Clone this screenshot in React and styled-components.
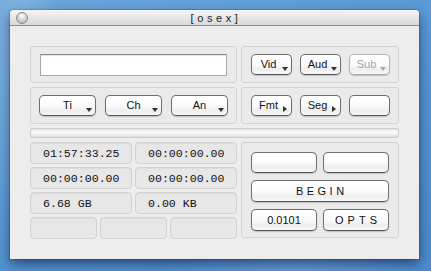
import React from "react";
import styled, { createGlobalStyle } from "styled-components";

const GlobalStyle = createGlobalStyle`
  html, body {
    margin: 0;
    padding: 0;
  }
  body {
    width: 431px;
    height: 271px;
    overflow: hidden;
    background:
      radial-gradient(ellipse 60px 300px at 20px 60px, rgba(255, 255, 255, 0.18), transparent 70%),
      radial-gradient(ellipse 200px 60px at 300px 270px, rgba(255, 255, 255, 0.12), transparent 70%),
      linear-gradient(160deg, #6aa6dc 0%, #5596d4 50%, #4a8acb 100%);
    font-family: "Liberation Sans", Arial, sans-serif;
  }
`;

const Desktop = styled.div`
  padding: 10px 0 0 10px;
`;

const Window = styled.div`
  width: 409px;
  height: 249px;
  background: #ededed;
  border-radius: 4px 4px 0 0;
  box-shadow: 0 5px 12px rgba(0, 0, 40, 0.5), 0 0 0 1px rgba(0, 0, 0, 0.15);
  display: flex;
  flex-direction: column;
  overflow: hidden;
`;

const TitleBar = styled.div`
  height: 15px;
  flex: none;
  position: relative;
  display: flex;
  align-items: center;
  justify-content: center;
  background: linear-gradient(#f6f6f6, #e4e4e4 60%, #dadada);
  border-bottom: 1px solid #8c8c8c;
`;

const CloseDot = styled.div`
  position: absolute;
  left: 6px;
  top: 2px;
  width: 10px;
  height: 10px;
  border-radius: 50%;
  border: 1px solid #8a8a8a;
  background: radial-gradient(circle at 50% 30%, #ffffff 0%, #d6d6d6 45%, #a9a9a9 100%);
`;

const Title = styled.div`
  font-size: 11px;
  letter-spacing: 3.6px;
  color: #222;
  padding-left: 3px;
`;

const Body = styled.div`
  padding: 20px 20px 0 20px;
  display: grid;
  grid-template-columns: 207px 158px;
  grid-template-rows: 37px 37px 10px 96px;
  column-gap: 4px;
  row-gap: 4px;
`;

const Panel = styled.div`
  border: 1px solid #d3d3d3;
  border-radius: 3px;
  background: #eaeaea;
  box-sizing: border-box;
  display: flex;
  align-items: center;
  gap: ${p => p.$gap || 8}px;
  padding: ${p => p.$pad || "0 9px"};
`;

const TextField = styled.div`
  width: 188px;
  height: 22px;
  box-sizing: border-box;
  background: #fff;
  border: 1px solid #a8a8a8;
  border-top-color: #8a8a8a;
  box-shadow: inset 0 1px 1px rgba(0, 0, 0, 0.12);
`;

const Button = styled.div`
  width: ${p => p.$w || 41}px;
  height: ${p => p.$h || 21}px;
  box-sizing: border-box;
  flex: none;
  position: relative;
  display: flex;
  align-items: center;
  justify-content: center;
  padding-bottom: 1px;
  border-radius: 5px;
  border: 1px solid ${p => (p.$disabled ? "#b4b4b4" : "#6e6e6e")};
  border-bottom-color: ${p => (p.$disabled ? "#a8a8a8" : "#555")};
  background: linear-gradient(#ffffff, #fbfbfb 50%, #eeeeee 75%, #f8f8f8);
  box-shadow: 0 1px 1px rgba(0, 0, 0, 0.18);
  font-size: 11px;
  letter-spacing: ${p => p.$spacing || 0}px;
  color: ${p => (p.$disabled ? "#a5a5a5" : "#111")};
  padding-left: ${p => p.$spacing || 0}px;
`;

const Label = styled.span`
  transform: translateX(${p => p.$shift || 0}px);
`;

const DownArrow = styled.span`
  position: absolute;
  right: 3px;
  bottom: 3px;
  width: 0;
  height: 0;
  border-left: 3px solid transparent;
  border-right: 3px solid transparent;
  border-top: 4px solid ${p => (p.$disabled ? "#a8a8a8" : "#333")};
`;

const RightArrow = styled.span`
  position: absolute;
  right: 4px;
  bottom: 3px;
  width: 0;
  height: 0;
  border-top: 3px solid transparent;
  border-bottom: 3px solid transparent;
  border-left: 4px solid #333;
`;

const Progress = styled.div`
  grid-column: 1 / 3;
  box-sizing: border-box;
  border: 1px solid #cbcbcb;
  border-radius: 2px;
  background: linear-gradient(#e4e4e4, #fbfbfb 40%, #f3f3f3 60%, #dedede);
`;

const Readouts = styled.div`
  display: grid;
  grid-template-columns: repeat(6, 1fr);
  grid-auto-rows: 22px;
  gap: 3px;
`;

const Cell = styled.div`
  grid-column: span ${p => p.$span || 3};
  box-sizing: border-box;
  border: 1px solid #d2d2d2;
  border-radius: 4px;
  background: #e7e7e7;
  box-shadow: inset 0 1px 1px rgba(0, 0, 0, 0.05);
  display: flex;
  align-items: center;
  padding-left: 12px;
  font-family: "Liberation Mono", "Courier New", monospace;
  font-size: 11.6px;
  color: #111;
`;

const ControlPanel = styled(Panel)`
  display: grid;
  grid-template-columns: 66px 66px;
  grid-template-rows: 21px 22px 22px;
  column-gap: 6px;
  row-gap: 7px;
  padding: 9px 9px 0 9px;
  align-content: start;
`;

const Wide = styled(Button)`
  grid-column: 1 / 3;
`;

const Menu = ({ label, w, disabled, arrow = "down", shift }) => (
  <Button $w={w} $disabled={disabled}>
    <Label $shift={shift}>{label}</Label>
    {arrow === "down" && <DownArrow $disabled={disabled} />}
    {arrow === "right" && <RightArrow />}
  </Button>
);

export default function App() {
  return (
    <>
      <GlobalStyle />
      <Desktop>
        <Window>
          <TitleBar>
            <CloseDot />
            <Title>[osex]</Title>
          </TitleBar>
          <Body>
            <Panel>
              <TextField />
            </Panel>
            <Panel $gap={8}>
              <Menu label="Vid" shift={-3} />
              <Menu label="Aud" shift={-3} />
              <Menu label="Sub" shift={-3} disabled />
            </Panel>
            <Panel $gap={9} $pad="0 8px">
              <Menu label="Ti" w={57} />
              <Menu label="Ch" w={57} />
              <Menu label="An" w={57} />
            </Panel>
            <Panel $gap={8}>
              <Menu label="Fmt" arrow="right" shift={-3} />
              <Menu label="Seg" arrow="right" shift={-3} />
              <Menu label="" arrow="none" />
            </Panel>
            <Progress />
            <Readouts>
              <Cell>01:57:33.25</Cell>
              <Cell>00:00:00.00</Cell>
              <Cell>00:00:00.00</Cell>
              <Cell>00:00:00.00</Cell>
              <Cell>6.68 GB</Cell>
              <Cell>0.00 KB</Cell>
              <Cell $span={2} />
              <Cell $span={2} />
              <Cell $span={2} />
            </Readouts>
            <ControlPanel>
              <Button $w={66} />
              <Button $w={66} />
              <Wide $w={138} $h={22} $spacing={3.5}>BEGIN</Wide>
              <Button $w={66} $h={22}>0.0101</Button>
              <Button $w={66} $h={22} $spacing={4}>OPTS</Button>
            </ControlPanel>
          </Body>
        </Window>
      </Desktop>
    </>
  );
}
